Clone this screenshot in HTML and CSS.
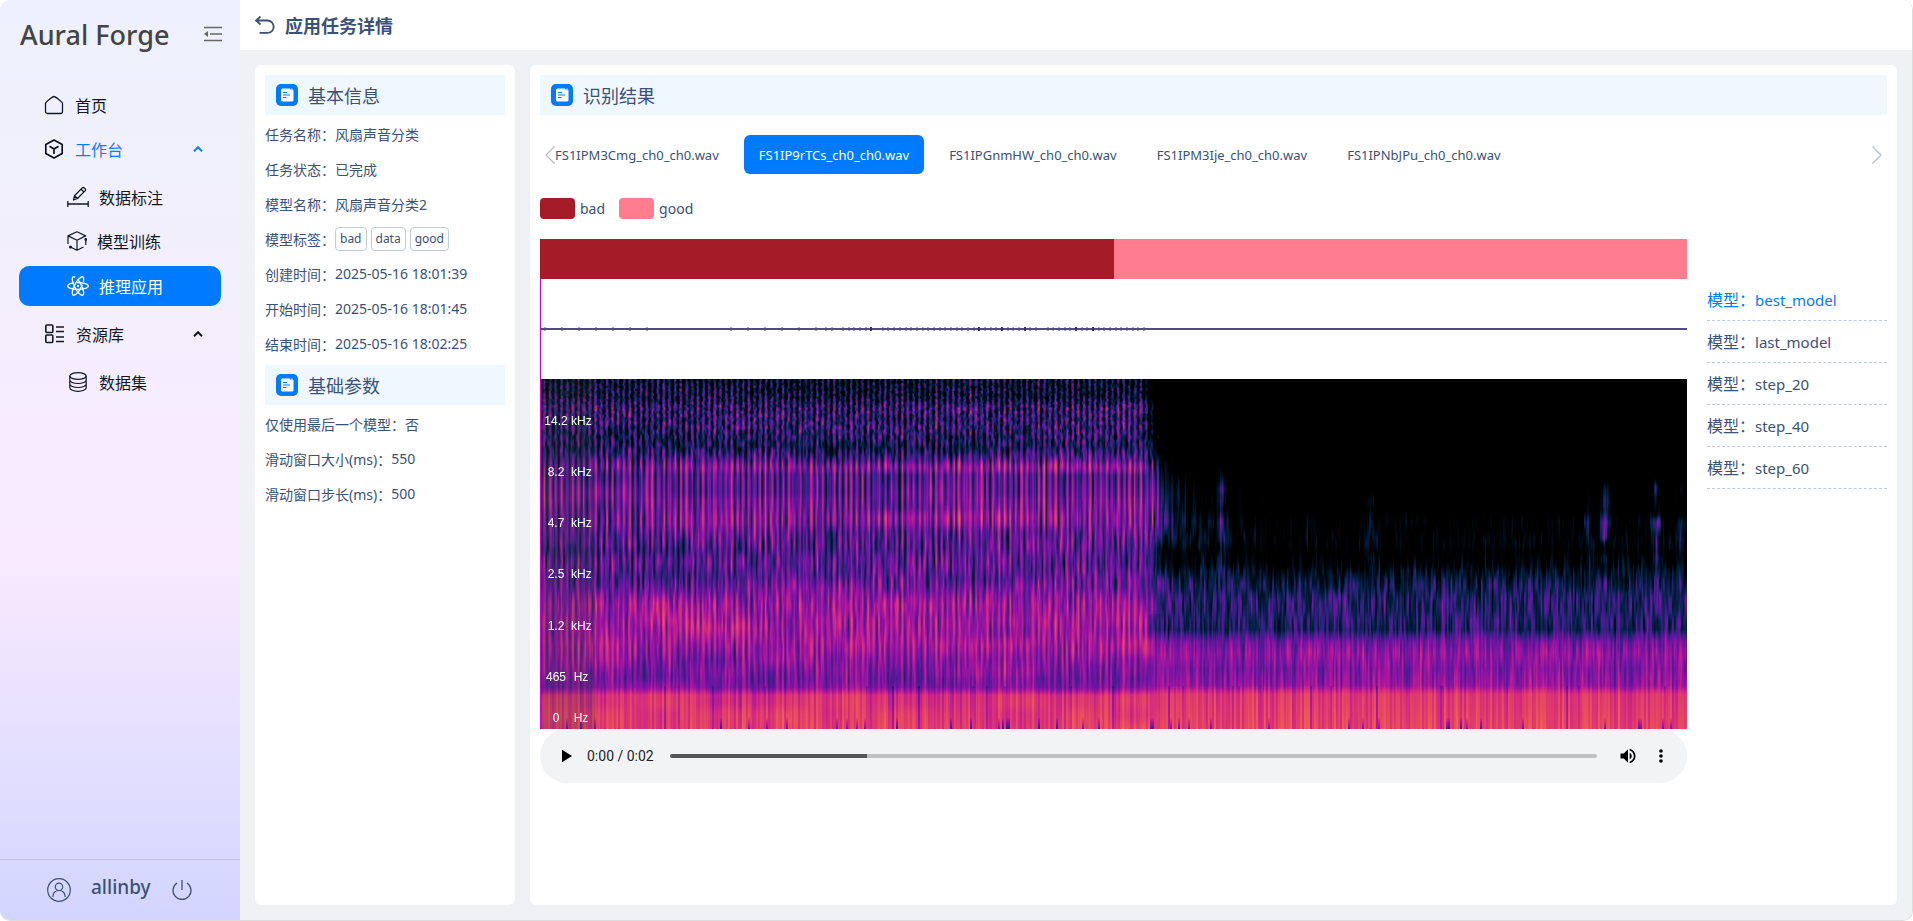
FILE: index.html
```html
<!DOCTYPE html>
<html lang="zh-CN">
<head>
<meta charset="utf-8">
<title>Aural Forge</title>
<link rel="stylesheet" href="styles.css">
</head>
<body>
<svg class="defs" aria-hidden="true">
  <symbol id="doc" viewBox="0 0 22 22">
    <rect width="22" height="22" rx="5" fill="#007bff"/>
    <path d="M5 6A1.500 1.500 0 0 1 6.500 4.500H14l1 1.700 2.500-.2v10a1.500 1.500 0 0 1-1.500 1.500H6.500A1.500 1.500 0 0 1 5 16z" fill="#fff"/>
    <path d="M7 8.500h4M7 11h7M7 13.500h3.500" stroke="#007bff" stroke-width="1.200"/>
    <circle cx="16" cy="5.200" r=".8" fill="#fff"/>
  </symbol>
</svg>
<div class="app">
  <aside class="sidebar">
    <div class="brand">
      <h1 class="brand-name">Aural Forge</h1>
      <button class="icon-btn" aria-label="收起菜单">
        <svg width="18" height="16" viewBox="0 0 18 16" fill="none" stroke="#666" stroke-width="1.700"><path d="M0 1.500h18M6 8h12M0 14.500h18"/><path d="M0 8l4-3v6z" fill="#666" stroke="none"/></svg>
      </button>
    </div>
    <nav class="menu">
      <a class="item" href="#"><svg width="20" height="20" viewBox="0 0 20 20" fill="none" stroke="#111827" stroke-width="1.300" stroke-linejoin="round"><path d="M1.500 8.300C1.500 7.300 8.700 1.500 10 1.500s8.500 5.800 8.500 6.800v8.200a2 2 0 0 1-2 2h-13a2 2 0 0 1-2-2z"/></svg>首页</a>
      <a class="item open" href="#"><svg width="20" height="20" viewBox="0 0 20 20" fill="none" stroke="#0b1020" stroke-width="1.700" stroke-linejoin="round"><path d="M10 1l8.200 4.600v8.800L10 19l-8.200-4.600V5.600z"/><path d="M5.500 7.300L10 10l4.500-2.700M10 10v5"/></svg>工作台<svg class="caret" width="10" height="6" viewBox="0 0 10 6" fill="none" stroke="currentColor" stroke-width="2"><path d="M1 5.200l4-4 4 4"/></svg></a>
      <a class="item sub" href="#"><svg width="22" height="20" viewBox="0 0 22 20" fill="none" stroke="#111827" stroke-width="1.300" stroke-linejoin="round"><path d="M6.500 13l1-4.200L15.300.9q1-.7 2.400.3t.5 2.400L10.500 11.500zM14 2.300l3 2.700M7.500 8.800l3 2.700M.8 14v6M21.200 14v6M1 17h20"/></svg>数据标注</a>
      <a class="item sub" href="#"><svg width="20" height="20" viewBox="0 0 20 20" fill="none" stroke="#111827" stroke-width="1.200" stroke-linejoin="round"><path d="M1 13V4.900L10 .8l8.700 4.100L10 9.200 1 4.900M10 9.200v10l6.500-3.200M10 19.200L3.500 16M18.800 8v6"/><circle cx="18.800" cy="8.500" r=".8" fill="#111827"/><circle cx="3.500" cy="16" r=".9" fill="#111827"/></svg>模型训练</a>
      <a class="item sub active" href="#"><svg width="22" height="20" viewBox="0 0 22 20" fill="none" stroke="#fff" stroke-width="1.300"><ellipse cx="11" cy="10" rx="10.300" ry="3.400" stroke-dasharray="30 3 14 3"/><ellipse cx="11" cy="10" rx="10.300" ry="3.400" transform="rotate(62 11 10)" stroke-dasharray="25 3 18 3"/><ellipse cx="11" cy="10" rx="10.300" ry="3.400" transform="rotate(118 11 10)" stroke-dasharray="28 3 15 3"/><circle cx="11" cy="10" r=".5"/></svg>推理应用</a>
      <a class="item group" href="#"><svg width="20" height="20" viewBox="0 0 20 20" fill="none" stroke="#111827" stroke-width="1.600"><rect x="1.800" y="1" width="7" height="7.500" rx="1"/><rect x="1.800" y="11" width="7" height="7.500" rx="1"/><path d="M12 3h8M12 7.500h8M12 13h8M12 17.500h8"/></svg>资源库<svg class="caret" width="10" height="6" viewBox="0 0 10 6" fill="none" stroke="currentColor" stroke-width="2"><path d="M1 5.200l4-4 4 4"/></svg></a>
      <a class="item sub" href="#"><svg width="22" height="20" viewBox="0 0 22 20" fill="none" stroke="#111827" stroke-width="1.200"><ellipse cx="11" cy="4" rx="8.200" ry="3.400"/><path d="M2.800 4v11.800c0 2 3.700 3.500 8.200 3.500s8.200-1.500 8.200-3.500V4M2.800 8c0 2 3.700 3.500 8.200 3.500s8.200-1.500 8.200-3.500M2.800 12c0 2 3.700 3.500 8.200 3.500s8.200-1.500 8.200-3.500"/></svg>数据集</a>
    </nav>
    <div class="user">
      <svg width="24" height="24" viewBox="0 0 24 24" fill="none" stroke="#3b5175" stroke-width="1.200"><circle cx="12" cy="12" r="11.300"/><circle cx="12" cy="8.800" r="3.700"/><path d="M6 19v-1.500a6 5 0 0 1 12 0V19"/></svg>
      <span class="user-name">allinby</span>
      <button class="icon-btn" aria-label="退出"><svg width="20" height="20" viewBox="0 0 20 20" fill="none" stroke="#3b5175" stroke-width="1.300"><path d="M10 0v10M5 3A9 9 0 1 0 15 3"/></svg></button>
    </div>
  </aside>
  <div class="page">
    <header class="topbar">
      <button class="icon-btn" aria-label="返回"><svg width="20" height="18" viewBox="0 0 20 18" fill="none" stroke="#3b5175" stroke-width="1.800"><path d="M5.500 0.500L1 4.500l4.500 4M1 4.500h11.500a6.200 6.200 0 0 1 0 12.400H4.500"/></svg></button>
      <h2 class="topbar-title">应用任务详情</h2>
    </header>
    <main class="content">
      <section class="card info">
        <h3 class="head"><svg width="22" height="22"><use href="#doc"/></svg>基本信息</h3>
        <dl class="fields">
          <div class="field"><dt>任务名称：</dt><dd>风扇声音分类</dd></div>
          <div class="field"><dt>任务状态：</dt><dd>已完成</dd></div>
          <div class="field"><dt>模型名称：</dt><dd>风扇声音分类2</dd></div>
          <div class="field"><dt>模型标签：</dt><dd class="tags"><span class="tag">bad</span><span class="tag">data</span><span class="tag">good</span></dd></div>
          <div class="field"><dt>创建时间：</dt><dd>2025-05-16 18:01:39</dd></div>
          <div class="field"><dt>开始时间：</dt><dd>2025-05-16 18:01:45</dd></div>
          <div class="field"><dt>结束时间：</dt><dd>2025-05-16 18:02:25</dd></div>
        </dl>
        <h3 class="head"><svg width="22" height="22"><use href="#doc"/></svg>基础参数</h3>
        <dl class="fields">
          <div class="field"><dt>仅使用最后一个模型：</dt><dd>否</dd></div>
          <div class="field"><dt>滑动窗口大小(ms)：</dt><dd>550</dd></div>
          <div class="field"><dt>滑动窗口步长(ms)：</dt><dd>500</dd></div>
        </dl>
      </section>
      <section class="card result">
        <h3 class="head"><svg width="22" height="22"><use href="#doc"/></svg>识别结果</h3>
        <div class="files">
          <button class="arrow" aria-label="上一页"><svg width="10" height="18" viewBox="0 0 10 18" fill="none" stroke="#b4bccb" stroke-width="1.200"><path d="M9.500.5L1 9l8.500 8.500"/></svg></button>
          <div class="tabs">
            <button class="tab">FS1IPM3Cmg_ch0_ch0.wav</button>
            <button class="tab active">FS1IP9rTCs_ch0_ch0.wav</button>
            <button class="tab">FS1IPGnmHW_ch0_ch0.wav</button>
            <button class="tab">FS1IPM3Ije_ch0_ch0.wav</button>
            <button class="tab">FS1IPNbJPu_ch0_ch0.wav</button>
          </div>
          <button class="arrow" aria-label="下一页"><svg width="10" height="18" viewBox="0 0 10 18" fill="none" stroke="#b4bccb" stroke-width="1.200"><path d="M.5.5L9 9 .5 17.500"/></svg></button>
        </div>
        <div class="legend">
          <span class="key"><i class="swatch bad"></i>bad</span>
          <span class="key"><i class="swatch good"></i>good</span>
        </div>
        <div class="analysis">
          <div class="viewer">
            <div class="segments"><div class="seg bad"></div><div class="seg good"></div></div>
            <div class="plots">
              <canvas class="wave" width="1147" height="100"></canvas>
              <div class="spectro">
                <canvas class="spec" width="1147" height="350"></canvas>
                <div class="axis">
                  <span><b>14.2</b><b>kHz</b></span>
                  <span><b>8.2</b><b>kHz</b></span>
                  <span><b>4.7</b><b>kHz</b></span>
                  <span><b>2.5</b><b>kHz</b></span>
                  <span><b>1.2</b><b>kHz</b></span>
                  <span><b>465</b><b>Hz</b></span>
                  <span><b>0</b><b>Hz</b></span>
                </div>
              </div>
              <div class="cursor"></div>
            </div>
            <div class="player">
              <button class="icon-btn" aria-label="播放"><svg width="24" height="24" viewBox="0 0 24 24"><path d="M8 5.700v12.600l10-6.300z"/></svg></button>
              <span class="time">0:00 / 0:02</span>
              <input class="track" type="range" min="0" max="1000" value="212" aria-label="播放进度">
              <button class="icon-btn" aria-label="音量"><svg width="20" height="20" viewBox="0 0 24 24"><path d="M3 9v6h4l5 5V4L7 9H3zm13.500 3A4.500 4.500 0 0 0 14 7.970v8.050c1.480-.73 2.500-2.250 2.500-4.020zM14 3.230v2.060c2.890.86 5 3.540 5 6.710s-2.110 5.850-5 6.710v2.060c4.010-.91 7-4.490 7-8.770s-2.990-7.860-7-8.770z"/></svg></button>
              <button class="icon-btn" aria-label="更多"><svg width="20" height="20" viewBox="0 0 24 24"><circle cx="12" cy="6" r="2.200"/><circle cx="12" cy="12" r="2.200"/><circle cx="12" cy="18" r="2.200"/></svg></button>
            </div>
          </div>
          <div class="models">
            <button class="model active">模型：<span>best_model</span></button>
            <button class="model">模型：<span>last_model</span></button>
            <button class="model">模型：<span>step_20</span></button>
            <button class="model">模型：<span>step_40</span></button>
            <button class="model">模型：<span>step_60</span></button>
          </div>
        </div>
      </section>
    </main>
  </div>
</div>
<script src="plots.js"></script>
</body>
</html>
```
FILE: styles.css
```css
* { box-sizing: border-box; }
body {
  margin: 0;
  background: #fff;
  color: #3b5175;
  font-family: "Noto Sans", "Noto Sans CJK SC", sans-serif;
  font-size: 14px;
}
h1, h2, h3, dl, dd { margin: 0; }
button { font: inherit; color: inherit; background: none; border: 0; padding: 0; cursor: pointer; }
svg { display: block; flex: none; }
.defs { position: absolute; width: 0; height: 0; }
.app {
  display: flex;
  min-height: 100vh;
  border: solid #dcdcdc;
  border-width: 0 1px 1px 0;
  border-radius: 10px;
  overflow: hidden;
}

.sidebar {
  display: flex;
  flex-direction: column;
  flex: none;
  width: 240px;
  background: linear-gradient(#eef1fd 0%, #f3effd 30%, #f9eafe 60%, #dedcff 88%, #d2d5ff 100%);
}
.brand { display: flex; align-items: center; justify-content: space-between; height: 68px; padding: 0 18px 0 20px; }
.brand-name { font-size: 27px; font-weight: 500; color: #444; }
.menu { display: flex; flex-direction: column; flex: 1; padding: 15px 19px; }
.item {
  display: flex;
  align-items: center;
  gap: 11px;
  height: 44px;
  padding: 0 18px 0 25px;
  color: #15171c;
  font-size: 16px;
  text-decoration: none;
}
.item.open { color: #0c7dff; }
.item.sub { gap: 10px; padding-left: 48px; }
.item.open + .sub { margin-top: 4px; }
.item.sub.active { height: 40px; margin: 3px 0 2px; background: #007bff; color: #fff; border-radius: 10px; }
.item.group { margin-top: 4px; gap: 12px; }
.item.group + .sub { margin-top: 4px; }
.caret { margin-left: auto; }
.user { display: flex; align-items: center; height: 61px; padding: 0 47px; border-top: 1px solid #c3c3dc; }
.user-name { margin: 0 21px 0 20px; padding-bottom: 6px; font-size: 19px; font-weight: 500; }

.page { display: flex; flex-direction: column; flex: 1; min-width: 0; background: #f0f1f5; }
.topbar { display: flex; align-items: center; gap: 10px; height: 50px; padding: 0 15px; background: #fff; }
.topbar-title { font-size: 18px; font-weight: 700; }
.content { display: flex; flex: 1; gap: 15px; padding: 15px; }
.card { background: #fff; border-radius: 6px; padding: 10px; }
.info { flex: none; width: 260px; }
.result { flex: 1; min-width: 0; }
.head {
  display: flex;
  align-items: center;
  gap: 10px;
  height: 40px;
  padding: 0 11px;
  background: #f0f8ff;
  font-size: 18px;
  font-weight: 400;
}
.fields { padding: 1px 0 4px; }
.field { display: flex; align-items: center; height: 35px; }
.tags { display: flex; gap: 4px; }
.tag { padding: 0 4px; border: 1px solid #c0cbdd; border-radius: 4px; font-size: 12px; line-height: 22px; }

.files { display: flex; align-items: center; height: 79px; padding: 0 5px; }
.tabs { display: flex; flex: 1; gap: 10px; }
.tab { height: 39px; padding: 0 15px; border-radius: 6px; font-size: 13px; }
.tab:first-child { padding-left: 0; }
.tab.active { background: #007bff; color: #fff; }
.legend { display: flex; gap: 14px; height: 29px; align-items: center; }
.key { display: flex; align-items: center; gap: 5px; }
.swatch { width: 35px; height: 21px; border-radius: 4px; }
.bad { background: #a51c28; }
.good { background: #ff7d8c; }
.analysis { display: flex; gap: 20px; margin-top: 16px; }
.viewer { flex: 1; min-width: 0; }
.segments { display: flex; height: 40px; }
.seg { flex: 1; }
.plots { position: relative; }
.wave, .spec { display: block; width: 100%; }
.wave { height: 100px; }
.spec { height: 350px; }
.spectro { position: relative; }
.cursor { position: absolute; inset: 0 auto 0 0; width: 1px; background: #c800c8; }
.axis {
  position: absolute;
  inset: 0 auto 0 0;
  display: flex;
  flex-direction: column;
  justify-content: space-between;
  width: 55px;
  padding: 33px 0 2px 1px;
  background: rgba(60, 60, 60, .2);
  color: #fff;
  font: 12px/18px "Liberation Sans", sans-serif;
}
.axis span { display: grid; grid-template-columns: 30px 20px; text-align: center; height: 18px; margin-bottom: 33px; }
.axis span:nth-last-child(2) { margin-bottom: 23px; }
.axis span:last-child { margin-bottom: 0; }
.axis b { font-weight: 400; }
.player { display: flex; align-items: center; height: 54px; padding: 0 16px 0 14px; border-radius: 27px; background: #f1f3f4; color: #222; }
.time { margin: 0 16px 0 9px; font: 14px Roboto, sans-serif; }
.track { flex: 1; appearance: none; height: 4px; margin: 0 21px 0 0; border-radius: 2px; background: linear-gradient(to right, #555 21.2%, #c0c1c2 21.2%); }
.track::-webkit-slider-thumb { appearance: none; width: 0; height: 0; }
.player .icon-btn + .icon-btn { margin-left: 13px; }
.models { display: flex; flex-direction: column; flex: none; width: 180px; padding-top: 40px; }
.model { height: 42px; padding-bottom: 2px; border-bottom: 1px dashed #bccadf; text-align: left; font-size: 16px; }
.model span { font-size: 15px; }
.model.active { color: #007bff; }
```
FILE: plots.js
```js
// Deterministic hash in [0, 1)
function hash(x, y) {
  let h = Math.imul(x | 0, 374761393) + Math.imul(y | 0, 668265263);
  h = Math.imul(h ^ (h >>> 13), 1274126177);
  return ((h ^ (h >>> 16)) >>> 0) / 4294967296;
}
// Smooth value noise
function noise(x, y) {
  const xi = Math.floor(x), yi = Math.floor(y);
  let u = x - xi, v = y - yi;
  u = u * u * (3 - 2 * u);
  v = v * v * (3 - 2 * v);
  const a = hash(xi, yi), b = hash(xi + 1, yi), c = hash(xi, yi + 1), d = hash(xi + 1, yi + 1);
  return (a + (b - a) * u) * (1 - v) + (c + (d - c) * u) * v;
}
// Piecewise linear curve through [position, value] pairs
function curve(points, t) {
  if (t <= points[0][0]) return points[0][1];
  for (let i = 1; i < points.length; i++) {
    const [x0, y0] = points[i - 1], [x1, y1] = points[i];
    if (t <= x1) return y0 + (y1 - y0) * (t - x0) / (x1 - x0);
  }
  return points[points.length - 1][1];
}
// Soft bump centred on c
function bump(t, c, width) {
  return Math.exp(-Math.pow((t - c) / width, 2));
}
const palette = [
  [0, 0, 0, 0], [.12, 0, 10, 22], [.25, 2, 32, 68], [.37, 50, 32, 125], [.48, 100, 22, 158],
  [.6, 160, 20, 160], [.72, 210, 40, 128], [.85, 232, 75, 92], [1, 255, 125, 72]
];
const channels = [1, 2, 3].map(k => palette.map(p => [p[0], p[k]]));

const loud = [
  [0, .17], [18, .2], [28, .32], [45, .34], [54, .3], [68, .27], [78, .38], [88, .45], [96, .43], [108, .47],
  [120, .5], [130, .48], [145, .5], [155, .47], [170, .44], [180, .46], [198, .45], [210, .52], [226, .57],
  [245, .6], [262, .6], [275, .57], [290, .54], [300, .51], [308, .54], [316, .75], [350, .79]
];
const comb = [[0, .17], [30, .2], [50, .16], [70, .12], [85, .15], [170, .12], [200, .09], [280, .08], [300, .04], [315, .01]];
const quiet = [
  [0, -.6], [90, -.38], [130, -.2], [142, -.06], [160, -.03], [172, -.08], [184, 0], [192, .13], [205, .24], [220, .34],
  [240, .34], [250, .31], [262, .5], [275, .57], [290, .53], [306, .58], [315, .77], [350, .82]
];
const loudGrain = [[0, .3], [60, .36], [200, .3], [240, .24], [300, .18], [315, .04]];
const quietGrain = [[0, .45], [180, .38], [250, .32], [262, .24], [306, .16], [315, .04]];
const clicks = [[681, .42, 4], [830, .26, 8], [1048, .32, 4], [1064, .44, 5], [1116, .5, 5], [1140, .3, 4]];

function drawSpectrogram(canvas) {
  const w = canvas.width, h = canvas.height, ctx = canvas.getContext('2d');
  const image = ctx.createImageData(w, h);
  const columns = [];
  for (let x = 0; x < w; x++) {
    // Every third stroke of the comb is stronger than its neighbours
    const n = Math.round((x - 4) / 5.68);
    columns.push({
      tone: hash(x >> 1, 900) - .5,
      dip: hash(x >> 1, 77) < .04,
      notch: hash(x >> 1, 31) < .06,
      pulse: Math.cos(2 * Math.PI * (x - 4) / 5.68) * (n % 3 === 0 ? 1.25 : .8 + hash(n, 3) * .3)
    });
  }
  for (let y = 0; y < h; y++) {
    const a = curve(loud, y), b = curve(quiet, y), c = curve(comb, y);
    const ga = curve(loudGrain, y), gb = curve(quietGrain, y);
    const tall = 2.5 + Math.pow(y / 350, 2) * 26;
    for (let x = 0; x < w; x++) {
      const col = columns[x];
      const grain = noise(x / 1.8, y / tall) + .5 * noise(x / 1.3 + 60, y / (tall * .6)) - .75;
      const mix = Math.max(0, Math.min(1, (x - 602) / (y < 235 ? 22 : 16)));
      let v = 0;
      if (mix < 1) {
        const l = a + c * col.pulse + ga * grain
          + (noise(x / 60, y / 14 + 40) - .5) * .08
          + .1 * bump(y, 88, 6) * Math.min(1, x / 320)
          + .07 * bump(y, 137, 9) * bump(x, 420, 220)
          + .06 * bump(y, 240, 16) * bump(x, 150, 70)
          + .1 * bump(y, 265, 25) * bump(x, 606, 16)
          - .1 * bump(y, 172, 10) * bump(x, 0, 190)
          - .06 * bump(y, 195, 14) * bump(x, 60, 90);
        v += (1 - mix) * l;
      }
      if (mix > 0) {
        let q = b + gb * grain + .62 * bump(y, 115, 55) * Math.exp(-(x - 618) / 42);
        for (const [cx, gain, cw] of clicks) {
          q += gain * bump(x, cx, cw) * bump(y, 130, 55) * (.6 + noise(cx, y / 12));
        }
        v += mix * q;
      }
      if (y > 225) v += col.tone * Math.min(.17, (y - 225) / 500);
      if (y > 306 && col.dip) v -= .12;
      if (y > 338 && col.notch) v -= (y - 338) * .03;
      v = Math.max(0, Math.min(1, v));
      const i = (y * w + x) * 4;
      for (let k = 0; k < 3; k++) image.data[i + k] = curve(channels[k], v);
      image.data[i + 3] = 255;
    }
  }
  ctx.putImageData(image, 0, 0);
}

function drawWave(canvas) {
  const ctx = canvas.getContext('2d');
  ctx.fillStyle = '#504b87';
  ctx.fillRect(0, 49, canvas.width, 2);
  ctx.fillStyle = 'rgba(80, 75, 135, .5)';
  for (let x = 4; x < 110; x += 17) ctx.fillRect(x, 48, 2, 4);
  for (let x = 190; x < 280; x += 17) ctx.fillRect(x, 48, 2, 4);
  for (let i = 0, x = 285; x < 604; i++, x = Math.round(285 + i * 5.68)) {
    ctx.fillStyle = i > 6 && hash(i, 5) < .15 ? '#35316b' : 'rgba(80, 75, 135, .5)';
    if (hash(i, 9) > .12) ctx.fillRect(x, 48, 2, 4);
  }
}

drawWave(document.querySelector('.wave'));
drawSpectrogram(document.querySelector('.spec'));
```
